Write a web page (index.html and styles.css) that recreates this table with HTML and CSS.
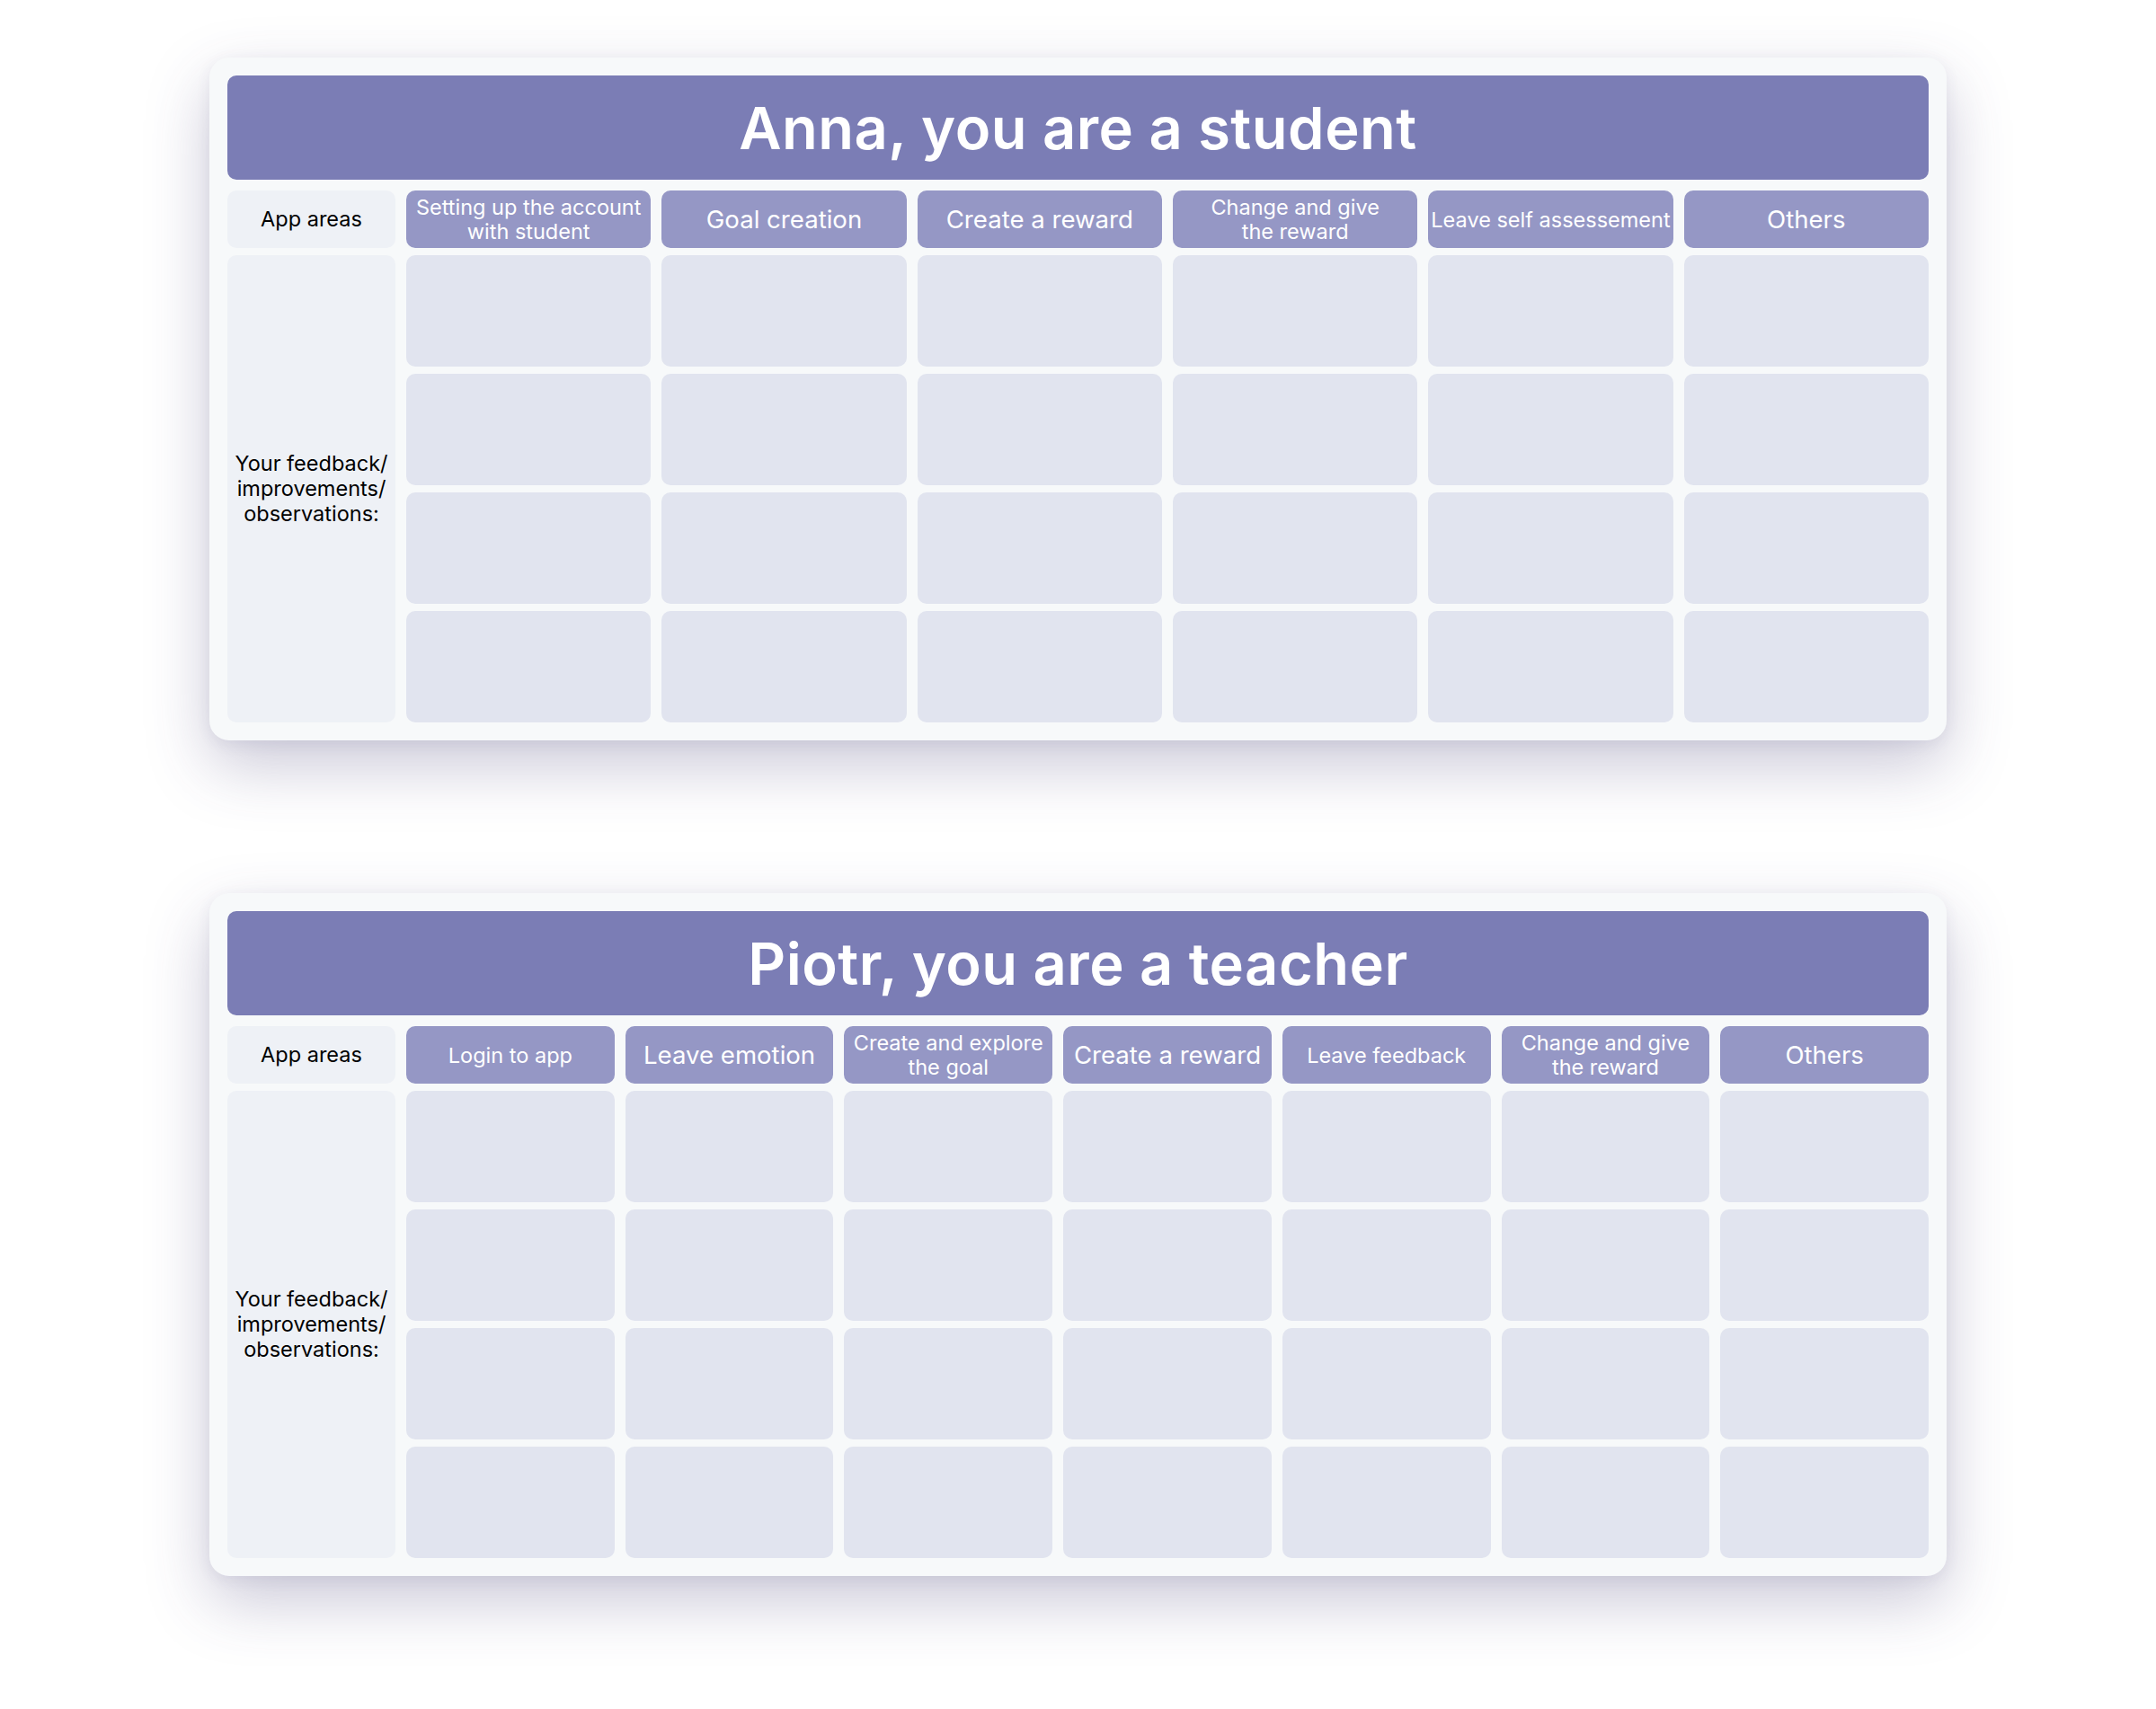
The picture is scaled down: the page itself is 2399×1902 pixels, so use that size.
FILE: index.html
```html
<!DOCTYPE html>
<html lang="en">
<head>
<meta charset="utf-8">
<title>Feedback boards</title>
<link rel="stylesheet" href="styles.css">
</head>
<body>
<main class="page">
  <section class="card">
    <h1 class="title">Anna, you are a student</h1>
    <div class="grid cols-6">
      <div class="label-cell">App areas</div>
      <div class="hdr sm">Setting up the account<br>with student</div>
      <div class="hdr lg">Goal creation</div>
      <div class="hdr lg">Create a reward</div>
      <div class="hdr sm">Change and give<br>the reward</div>
      <div class="hdr sm">Leave self assessement</div>
      <div class="hdr lg">Others</div>
      <div class="label-cell side">Your feedback/<br>improvements/<br>observations:</div>
      <div class="cell"></div><div class="cell"></div><div class="cell"></div><div class="cell"></div><div class="cell"></div><div class="cell"></div>
      <div class="cell"></div><div class="cell"></div><div class="cell"></div><div class="cell"></div><div class="cell"></div><div class="cell"></div>
      <div class="cell"></div><div class="cell"></div><div class="cell"></div><div class="cell"></div><div class="cell"></div><div class="cell"></div>
      <div class="cell"></div><div class="cell"></div><div class="cell"></div><div class="cell"></div><div class="cell"></div><div class="cell"></div>
    </div>
  </section>

  <section class="card">
    <h1 class="title">Piotr, you are a teacher</h1>
    <div class="grid cols-7">
      <div class="label-cell">App areas</div>
      <div class="hdr sm">Login to app</div>
      <div class="hdr lg">Leave emotion</div>
      <div class="hdr sm">Create and explore<br>the goal</div>
      <div class="hdr lg">Create a reward</div>
      <div class="hdr sm">Leave feedback</div>
      <div class="hdr sm">Change and give<br>the reward</div>
      <div class="hdr lg">Others</div>
      <div class="label-cell side">Your feedback/<br>improvements/<br>observations:</div>
      <div class="cell"></div><div class="cell"></div><div class="cell"></div><div class="cell"></div><div class="cell"></div><div class="cell"></div><div class="cell"></div>
      <div class="cell"></div><div class="cell"></div><div class="cell"></div><div class="cell"></div><div class="cell"></div><div class="cell"></div><div class="cell"></div>
      <div class="cell"></div><div class="cell"></div><div class="cell"></div><div class="cell"></div><div class="cell"></div><div class="cell"></div><div class="cell"></div>
      <div class="cell"></div><div class="cell"></div><div class="cell"></div><div class="cell"></div><div class="cell"></div><div class="cell"></div><div class="cell"></div>
    </div>
  </section>
</main>
</body>
</html>
```

FILE: styles.css
```css
html, body {
  margin: 0;
  padding: 0;
  background: #ffffff;
}

body {
  font-family: Inter, "Noto Sans", "Liberation Sans", sans-serif;
}

.page {
  width: 1933px;
  margin: 0 auto;
  padding-top: 64px;
  padding-bottom: 100px;
  display: flex;
  flex-direction: column;
  gap: 170px;
}

.card {
  background: #f7f9fa;
  border-radius: 22px;
  padding: 20px;
  box-shadow: 0 28px 70px rgba(70, 60, 115, 0.28), 0 4px 16px rgba(70, 60, 115, 0.08);
}

.title {
  margin: 0 0 12px 0;
  height: 116px;
  display: flex;
  align-items: center;
  justify-content: center;
  background: #7b7db5;
  border-radius: 10px;
  color: #ffffff;
  font-size: 65px;
  font-weight: 600;
  letter-spacing: 0.5px;
}

.grid {
  display: grid;
  column-gap: 12px;
  row-gap: 8px;
  grid-template-rows: 64px repeat(4, 124px);
}

.cols-6 {
  grid-template-columns: 187px repeat(6, 1fr);
}

.cols-7 {
  grid-template-columns: 187px repeat(7, 1fr);
}

.label-cell {
  background: #eef1f6;
  border-radius: 10px;
  display: flex;
  align-items: center;
  justify-content: center;
  text-align: center;
  color: #000000;
  font-size: 23.5px;
  line-height: 28px;
}

.side {
  grid-row: 2 / span 4;
}

.hdr {
  background: #9597c5;
  border-radius: 10px;
  display: flex;
  align-items: center;
  justify-content: center;
  text-align: center;
  color: #ffffff;
  white-space: nowrap;
}

.hdr.sm {
  font-size: 23.5px;
  line-height: 27px;
}

.hdr.lg {
  font-size: 27.6px;
  line-height: 32px;
}

.cell {
  background: #e1e4ef;
  border-radius: 10px;
}
```
